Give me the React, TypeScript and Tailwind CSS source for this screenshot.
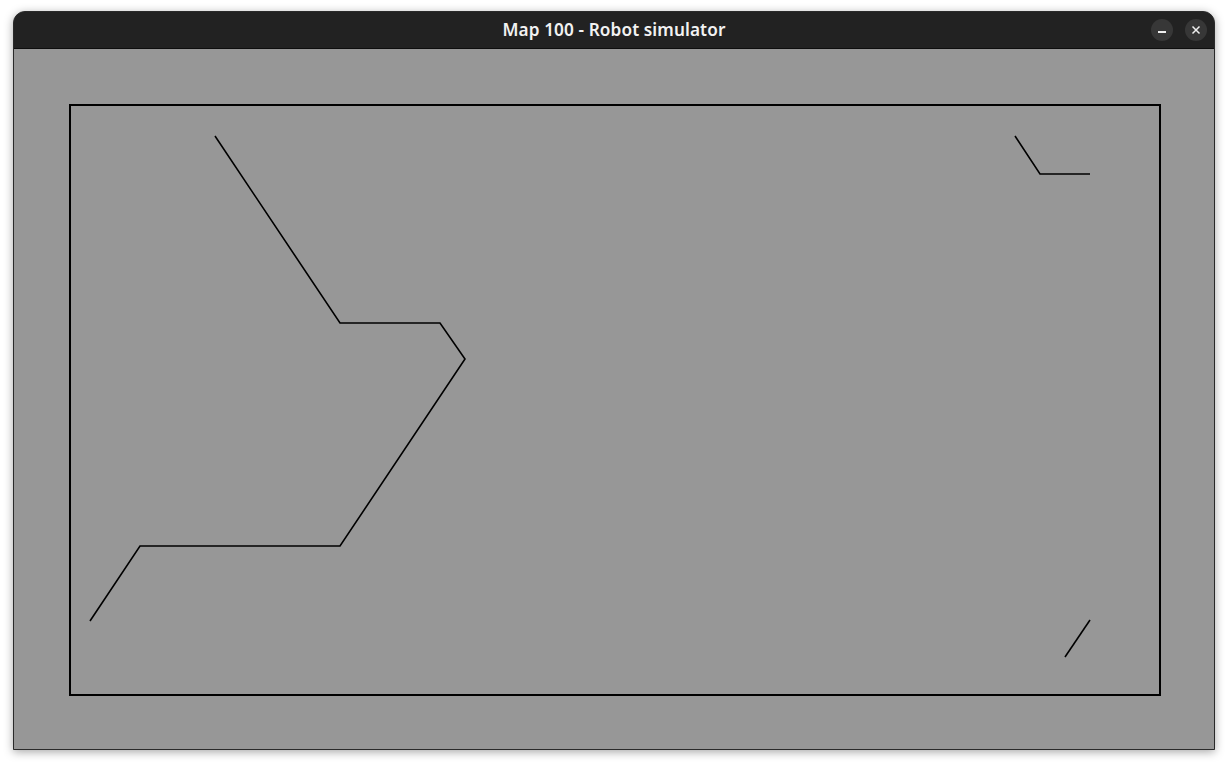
import React from 'react';

const path1 = '215,136 340,323 440,323 465,359 340,546 140,546 90,621';
const path2 = '1015,136 1040,174 1090,174';

const App: React.FC = () => {
  return (
    <div className="w-[1228px] h-[766px] bg-white overflow-hidden pt-[11px] pl-[13px]">
      <div className="w-[1202px] rounded-t-[12px] border border-[#2a2a2a] bg-[#222222] shadow-[0_2px_10px_rgba(0,0,0,0.35)] overflow-hidden">
        {/* title bar */}
        <div className="relative h-[37px] flex items-center justify-center border-b border-[#0e0e0e]">
          <span className="text-[17.2px] font-semibold text-[#f2f2f2] tracking-[0.1px]" style={{ fontFamily: '"Noto Sans", "Open Sans", sans-serif' }}>
            Map 100 - Robot simulator
          </span>
          <div className="absolute right-[7px] top-[7px] flex gap-[12px]">
            <button className="w-[22px] h-[22px] rounded-full bg-[#373737] flex items-center justify-center">
              <span className="block w-[8px] h-[1.5px] bg-[#eeeeee] mt-[4px]" />
            </button>
            <button className="w-[22px] h-[22px] rounded-full bg-[#373737] flex items-center justify-center">
              <svg width="10" height="10" viewBox="0 0 10 10">
                <path d="M1.5 1.5 L8.5 8.5 M8.5 1.5 L1.5 8.5" stroke="#eeeeee" strokeWidth="1.5" />
              </svg>
            </button>
          </div>
        </div>
        {/* map canvas */}
        <div className="h-[700px] bg-[#979797]">
          <svg width="1200" height="700" viewBox="14 49 1200 700" className="block">
            <rect x="70" y="105" width="1090" height="590" fill="none" stroke="#000" strokeWidth="2" />
            <polyline points={path1} fill="none" stroke="#000" strokeWidth="1.6" />
            <polyline points={path2} fill="none" stroke="#000" strokeWidth="1.6" />
            <line x1="1090" y1="620" x2="1065" y2="657" stroke="#000" strokeWidth="1.6" />
          </svg>
        </div>
      </div>
    </div>
  );
};

export default App;
